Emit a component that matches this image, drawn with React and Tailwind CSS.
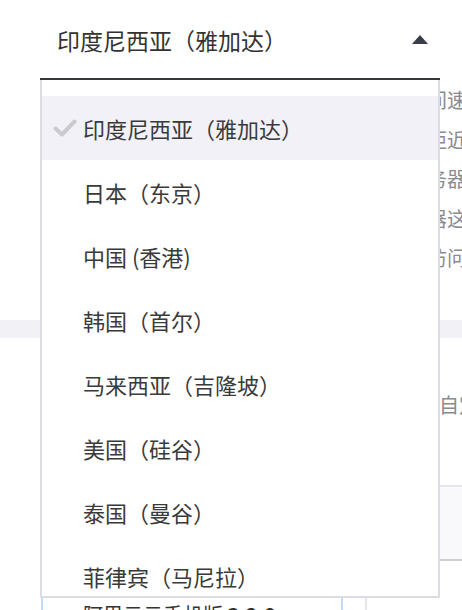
const REGIONS = [
  "印度尼西亚（雅加达）",
  "日本（东京）",
  "中国 (香港)",
  "韩国（首尔）",
  "马来西亚（吉隆坡）",
  "美国（硅谷）",
  "泰国（曼谷）",
  "菲律宾（马尼拉）",
];

const font = { fontFamily: '"Noto Sans CJK SC", "Noto Sans", sans-serif' };

// lines of the page text that peek out to the right of the menu
const BG_LINES = [
  { text: "时间速", ml: "ml-[407px]" },
  { text: "距近", ml: "ml-[427px]" },
  { text: "服务器", ml: "ml-[407px]" },
  { text: "器这", ml: "ml-[427px]" },
  { text: "访问", ml: "ml-[427px]" },
];

const Check = () => (
  <svg width="24" height="18" viewBox="0 0 24 18" fill="none">
    <path d="M2.5 9.5 L9 15.5 L21.5 2.5" stroke="#cbcbcf" strokeWidth="4" strokeLinecap="round" strokeLinejoin="round" />
  </svg>
);

const App = () => {
  const selected = REGIONS[0];

  return (
    <div className="relative w-[462px] h-[610px] overflow-hidden bg-white" style={font}>
      {/* Select */}
      <div className="h-[80px] ml-[40px] w-[400px] flex items-center justify-between pl-[17px] pr-[12px] border-b-2 border-[#353840]">
        <span className="text-[23px] text-[#333] leading-none pt-[2px]">{selected}</span>
        <svg width="16" height="9" viewBox="0 0 16 9">
          <path d="M8 0 L16 9 L0 9 Z" fill="#3a3d4a" />
        </svg>
      </div>

      {/* Page content behind the menu */}
      <div className="text-[20px] text-[#8a8a8f]">
        {BG_LINES.map((line) => (
          <div key={line.text} className={`h-[39.5px] leading-[39.5px] whitespace-nowrap ${line.ml}`}>
            {line.text}
          </div>
        ))}
      </div>
      <div className="mt-[42px] h-[18px] bg-[#f2f2f6]" />
      <div className="mt-[52px] h-[30px] leading-[30px] text-[20px] text-[#8a8a8f] pl-[439px] whitespace-nowrap">
        自定
      </div>
      <div className="mt-[65px] flex">
        <div className="w-[365px]" />
        <div className="flex-1 h-[76px] bg-[#f9f9fb] border-t-2 border-[#e6e6eb] border-b-2 border-b-[#cdcdd2]" />
      </div>
      <div className="flex">
        <div className="w-[41px]" />
        <div className="w-[302px] h-[90px] -mt-[20px] border-x-2 border-[#c3daf5] pl-[40px] pt-[60px] text-[20px] leading-[28px] text-[#333] whitespace-nowrap">
          阿里云云手机版 <span className="font-bold">3.2.0</span>
        </div>
        <div className="w-[22px]" />
        <div className="flex-1 h-[50px] border-l-2 border-[#e4e4ea]" />
      </div>

      {/* Dropdown menu */}
      <div className="absolute left-[40px] top-[80px] w-[400px] h-[518px] bg-white border-x-2 border-b-2 border-[#dcdce4] overflow-hidden pt-[16px]">
        {REGIONS.map((name) => {
          const active = name === selected;
          return (
            <div
              key={name}
              className={`h-[64px] flex items-center ${active ? "bg-[#f2f1f7]" : ""}`}
            >
              <div className="w-[41px] flex justify-center pl-[4px]">{active && <Check />}</div>
              <span className="text-[22px] text-[#3a3a3a] leading-none">{name}</span>
            </div>
          );
        })}
      </div>
    </div>
  );
};

export default App;
